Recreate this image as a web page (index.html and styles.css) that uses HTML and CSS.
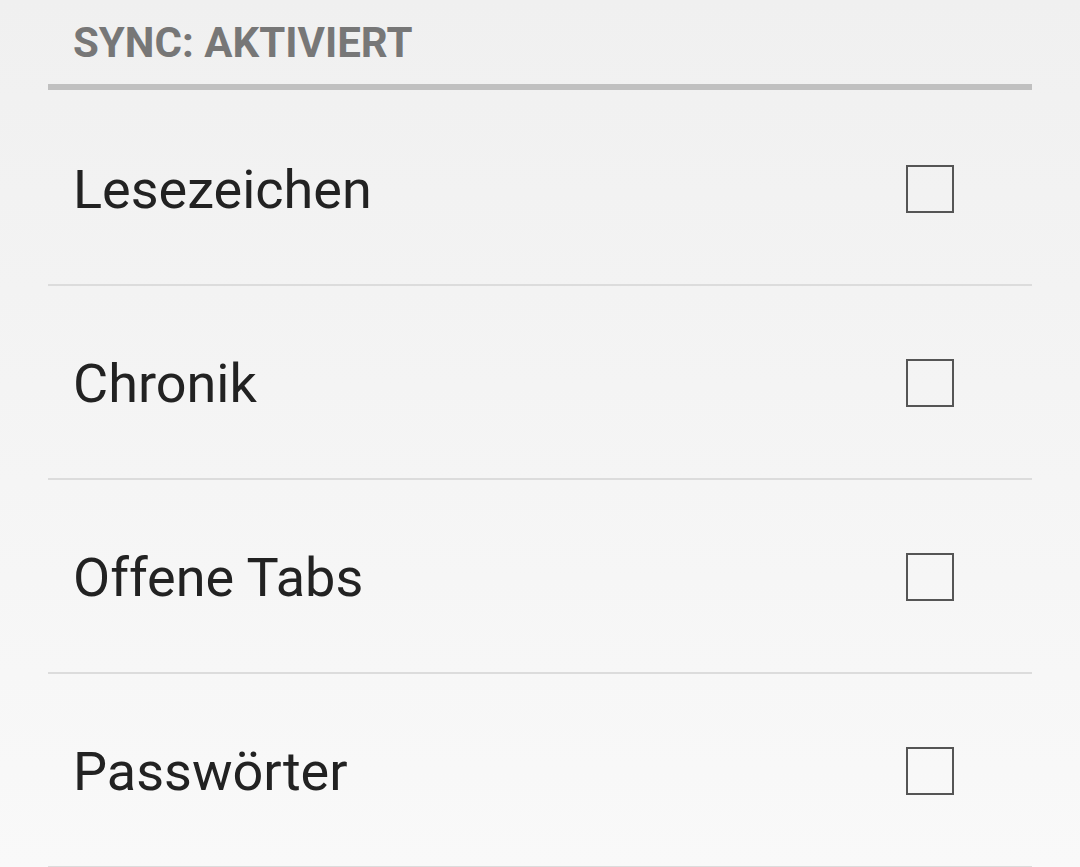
FILE: index.html
```html
<!DOCTYPE html>
<html lang="de">
<head>
  <meta charset="UTF-8">
  <title>Sync</title>
  <link rel="stylesheet" href="styles.css">
</head>
<body>

<div class="screen">
  <div class="category">SYNC: AKTIVIERT</div>

  <div class="pref">
    <span class="pref-title">Lesezeichen</span>
    <span class="checkbox"></span>
  </div>
  <div class="pref">
    <span class="pref-title">Chronik</span>
    <span class="checkbox"></span>
  </div>
  <div class="pref">
    <span class="pref-title">Offene Tabs</span>
    <span class="checkbox"></span>
  </div>
  <div class="pref">
    <span class="pref-title">Passwörter</span>
    <span class="checkbox"></span>
  </div>
</div>

</body>
</html>
```

FILE: styles.css
```css
* {
  box-sizing: border-box;
  font-family: Roboto, 'Noto Sans', sans-serif;
}

html, body {
  margin: 0;
  height: 100%;
}

body {
  background: linear-gradient(#f0f0f0, #f9f9f9);
  overflow: hidden;
}

.screen {
  padding: 0 48px;
}

.category {
  font-size: 42px;
  font-weight: bold;
  color: #777;
  line-height: 42px;
  padding: 22px 0 0 25px;
  height: 90px;
  margin-bottom: 2px;
  border-bottom: 6px solid #c0c0c0;
}

.pref {
  display: flex;
  align-items: center;
  justify-content: space-between;
  height: 194px;
  padding: 2px 78px 0 25px;
  border-bottom: 2px solid #dcdcdc;
}

.pref-title {
  font-size: 54px;
  color: #222;
}

.checkbox {
  width: 48px;
  height: 48px;
  border: 2px solid #555;
}
```
